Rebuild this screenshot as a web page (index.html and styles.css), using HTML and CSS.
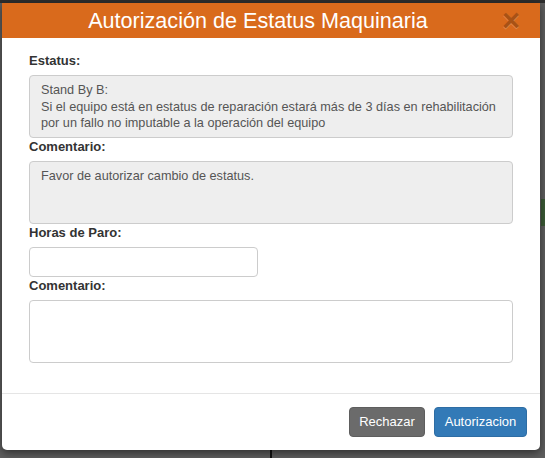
FILE: index.html
```html
<!DOCTYPE html>
<html lang="es">
<head>
<meta charset="utf-8">
<title>Autorización de Estatus Maquinaria</title>
<link rel="stylesheet" href="styles.css">
</head>
<body>
<div class="modal">
  <div class="modal-header">
    <h4 class="modal-title">Autorización de Estatus Maquinaria</h4>
    <button class="close" type="button">×</button>
  </div>
  <div class="modal-body">
    <label class="lbl">Estatus:</label>
    <div class="box readonly">Stand By B:<br>Si el equipo está en estatus de reparación estará más de 3 días en rehabilitación por un fallo no imputable a la operación del equipo</div>
    <label class="lbl">Comentario:</label>
    <div class="box readonly">Favor de autorizar cambio de estatus.</div>
    <label class="lbl">Horas de Paro:</label>
    <input class="input" type="text">
    <label class="lbl">Comentario:</label>
    <textarea class="box area"></textarea>
  </div>
  <div class="modal-footer">
    <button class="btn btn-gray" type="button">Rechazar</button>
    <button class="btn btn-blue" type="button">Autorizacion</button>
  </div>
</div>
</body>
</html>
```

FILE: styles.css
```css
* { box-sizing: border-box; }
html, body { height: 100%; }
body {
  margin: 0;
  font-family: Arial, "Liberation Sans", sans-serif;
  color: #333;
  background:
    linear-gradient(#2d2d2d, #2d2d2d) 0 0 / 100% 3px no-repeat,
    linear-gradient(#3b5a35, #3b5a35) 541px 199px / 4px 27px no-repeat,
    linear-gradient(#111, #111) 270px 450px / 2px 8px no-repeat,
    #5e5e5e;
  padding: 3px 5px 0 2px;
  overflow: hidden;
}
.modal {
  width: 538px;
  height: 447px;
  background: #fff;
  border-radius: 0 0 5px 5px;
  box-shadow: 0 3px 9px rgba(0,0,0,.5);
  display: flex;
  flex-direction: column;
}
.modal-header {
  position: relative;
  height: 35px;
  background: #d96a1c;
  display: flex;
  align-items: center;
  justify-content: center;
  padding-right: 26px;
}
.modal-title {
  margin: 0;
  color: #fff;
  font-weight: normal;
  font-size: 21.6px;
  line-height: 24px;
  white-space: nowrap;
}
.close {
  position: absolute;
  right: 20px;
  top: 5px;
  padding: 0;
  border: 0;
  background: none;
  font-family: Arial, "Liberation Sans", sans-serif;
  font-size: 31px;
  font-weight: bold;
  line-height: 26px;
  color: #000;
  opacity: .22;
  text-shadow: 0 1px 0 #fff;
}
.modal-body {
  flex: 1;
  padding: 14px 27px 0 27px;
  display: flex;
  flex-direction: column;
  align-items: flex-start;
}
.lbl {
  display: block;
  font-size: 13px;
  font-weight: bold;
  line-height: 18px;
  margin-bottom: 5px;
  color: #333;
}
.box {
  width: 100%;
  height: 63px;
  border: 1px solid #ccc;
  border-radius: 4px;
  padding: 6px 6px 6px 11px;
  font-family: Arial, "Liberation Sans", sans-serif;
  font-size: 12.7px;
  line-height: 16.7px;
  color: #555;
}
.readonly {
  background: #eee;
}
.area {
  background: #fff;
  resize: none;
  margin: 0;
  display: block;
}
.input {
  width: 229px;
  height: 30px;
  border: 1px solid #ccc;
  border-radius: 4px;
  margin: 0;
  background: #fff;
}
.modal-footer {
  border-top: 1px solid #e5e5e5;
  padding: 13px 13px 13px;
  display: flex;
  justify-content: flex-end;
  gap: 9px;
}
.btn {
  height: 30px;
  padding: 5px 8px;
  font-family: Arial, "Liberation Sans", sans-serif;
  font-size: 13px;
  line-height: 18px;
  color: #fff;
  border-radius: 4px;
  border: 1px solid transparent;
  white-space: nowrap;
}
.btn-gray {
  width: 76px;
  background: #6b6b6b;
  border-color: #5e5e5e;
}
.btn-blue {
  width: 93px;
  background: #337ab7;
  border-color: #2e6da4;
}
```
